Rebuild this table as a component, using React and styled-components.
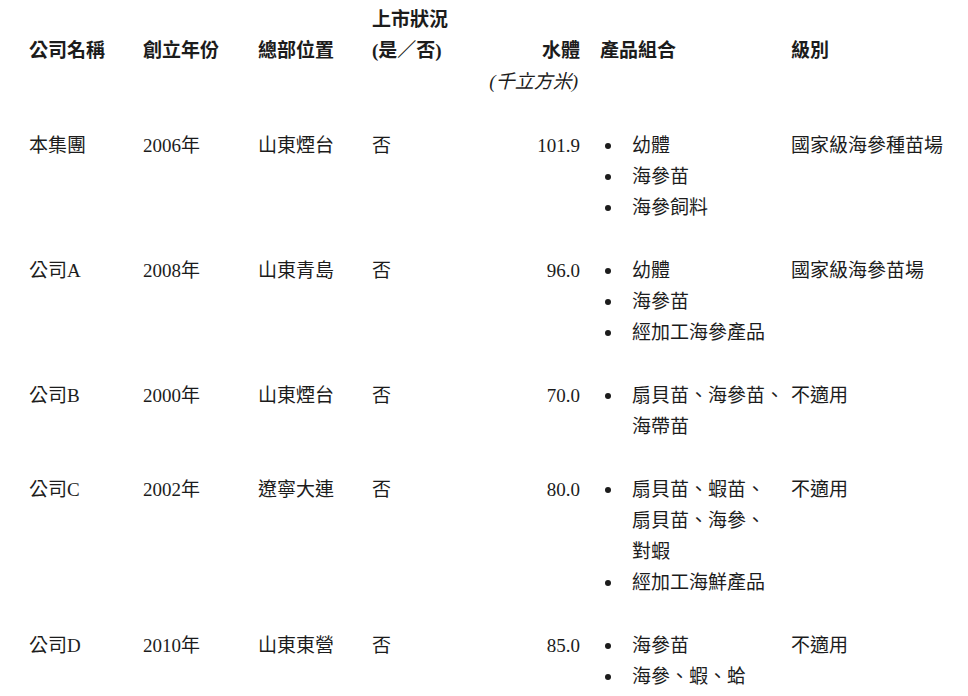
import React from "react";
import styled, { createGlobalStyle } from "styled-components";

const GlobalStyle = createGlobalStyle`
    html, body {
        margin: 0;
        padding: 0;
        background: #fff;
    }
    body {
        font-family: "Liberation Serif", "Noto Sans CJK TC", serif;
        font-size: 19px;
        line-height: 31px;
        color: #1c1c1c;
    }
`;

const COLUMNS = "114px 115px 114px 98px 110px 211px 1fr";

const Page = styled.div`
    width: 968px;
    height: 696px;
    box-sizing: border-box;
    padding: 4px 0 0 29px;
    overflow: hidden;
`;

const HeaderRow = styled.div`
    display: grid;
    grid-template-columns: ${COLUMNS};
    align-items: end;
    font-weight: 700;
`;

const UnitRow = styled.div`
    display: grid;
    grid-template-columns: ${COLUMNS};
`;

const Row = styled.div`
    display: grid;
    grid-template-columns: ${COLUMNS};
    align-items: start;
    margin-top: ${(p) => (p.$first ? "33px" : "32px")};
`;

const Cell = styled.div`
    white-space: nowrap;
    text-align: ${(p) => (p.$right ? "right" : "left")};
    padding-left: ${(p) => (p.$inset ? "20px" : "0")};
`;

const Unit = styled.div`
    grid-column: 5;
    text-align: right;
    font-style: italic;
    padding-right: 2px;
    white-space: nowrap;
`;

const List = styled.ul`
    list-style: none;
    margin: 0;
    padding: 0 0 0 20px;
`;

const Item = styled.li`
    display: grid;
    grid-template-columns: 32px 1fr;
    white-space: nowrap;
`;

const Bullet = styled.span`
    display: flex;
    align-items: center;
    height: 31px;
    padding-left: 5px;

    &::before {
        content: "";
        width: 6px;
        height: 6px;
        border-radius: 50%;
        background: #1c1c1c;
    }
`;

const rows = [
    {
        name: "本集團",
        year: "2006年",
        place: "山東煙台",
        listed: "否",
        volume: "101.9",
        products: [["幼體"], ["海參苗"], ["海參飼料"]],
        level: "國家級海參種苗場"
    },
    {
        name: "公司A",
        year: "2008年",
        place: "山東青島",
        listed: "否",
        volume: "96.0",
        products: [["幼體"], ["海參苗"], ["經加工海參產品"]],
        level: "國家級海參苗場"
    },
    {
        name: "公司B",
        year: "2000年",
        place: "山東煙台",
        listed: "否",
        volume: "70.0",
        products: [["扇貝苗、海參苗、", "海帶苗"]],
        level: "不適用"
    },
    {
        name: "公司C",
        year: "2002年",
        place: "遼寧大連",
        listed: "否",
        volume: "80.0",
        products: [["扇貝苗、蝦苗、", "扇貝苗、海參、", "對蝦"], ["經加工海鮮產品"]],
        level: "不適用"
    },
    {
        name: "公司D",
        year: "2010年",
        place: "山東東營",
        listed: "否",
        volume: "85.0",
        products: [["海參苗"], ["海參、蝦、蛤"]],
        level: "不適用"
    }
];

const Products = ({ items }) => (
    <List>
        {items.map((lines, i) => (
            <Item key={i}>
                <Bullet />
                <span>
                    {lines.map((line, j) => (
                        <React.Fragment key={j}>
                            {j > 0 && <br />}
                            {line}
                        </React.Fragment>
                    ))}
                </span>
            </Item>
        ))}
    </List>
);

const App = () => {
    return (
        <>
            <GlobalStyle />
            <Page>
                <HeaderRow>
                    <Cell>公司名稱</Cell>
                    <Cell>創立年份</Cell>
                    <Cell>總部位置</Cell>
                    <Cell>
                        上市狀況
                        <br />
                        (是／否)
                    </Cell>
                    <Cell $right>水體</Cell>
                    <Cell $inset>產品組合</Cell>
                    <Cell>級別</Cell>
                </HeaderRow>
                <UnitRow>
                    <Unit>(千立方米)</Unit>
                </UnitRow>
                {rows.map((r, i) => (
                    <Row key={r.name} $first={i === 0}>
                        <Cell>{r.name}</Cell>
                        <Cell>{r.year}</Cell>
                        <Cell>{r.place}</Cell>
                        <Cell>{r.listed}</Cell>
                        <Cell $right>{r.volume}</Cell>
                        <Products items={r.products} />
                        <Cell>{r.level}</Cell>
                    </Row>
                ))}
            </Page>
        </>
    );
};

export default App;
